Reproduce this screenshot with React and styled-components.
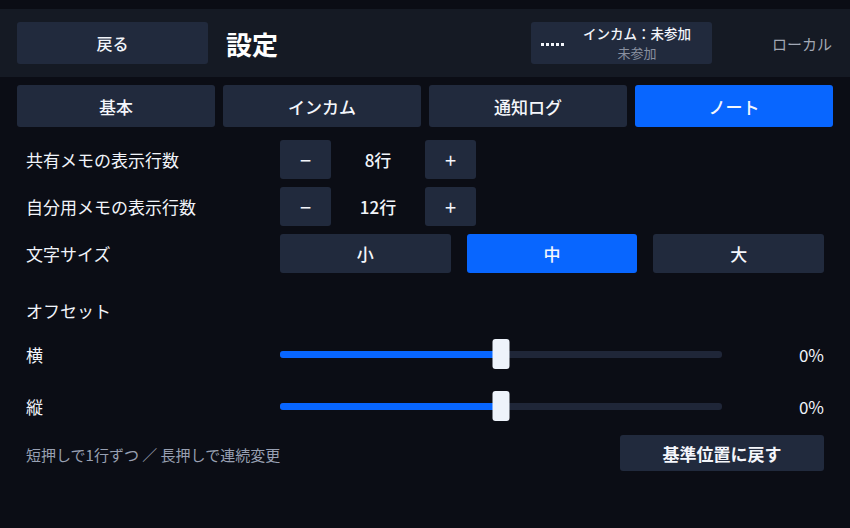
import React, {useState} from "react";
import styled, {createGlobalStyle} from "styled-components";

const GlobalStyle = createGlobalStyle`
  html, body {
	margin: 0;
	padding: 0;
	background-color: #0b0d15;
  }

  body {
	font-family: "Noto Sans CJK JP", "Noto Sans", sans-serif;
	color: #f1f4fa;
  }

  button {
	font-family: inherit;
  }
`;

const Screen = styled.div`
  width: 850px;
  height: 528px;
  padding-top: 9px;
  box-sizing: border-box;
  overflow: hidden;
`;

const Header = styled.header`
  height: 68px;
  background-color: #151a24;
  display: flex;
  align-items: center;
  padding: 0 18px 0 17px;
`;

const BackButton = styled.button`
  width: 191px;
  height: 42px;
  border: none;
  border-radius: 3px;
  background-color: #212a3d;
  color: #f1f4fa;
  font-size: 16px;
  font-weight: 500;
`;

const Title = styled.h1`
  margin: 0 0 0 18px;
  font-size: 26px;
  font-weight: 700;
  color: #ffffff;
`;

const IntercomBox = styled.div`
  margin-left: auto;
  width: 181px;
  height: 42px;
  box-sizing: border-box;
  border-radius: 3px;
  background-color: #212a3d;
  display: flex;
  align-items: center;
  padding: 0 10px;
`;

const Dots = styled.div`
  display: flex;
  gap: 2px;
  margin-top: 2px;

  span {
	width: 3px;
	height: 3px;
	background-color: #f1f4fa;
  }
`;

const IntercomText = styled.div`
  flex: 1;
  display: flex;
  flex-direction: column;
  align-items: center;
  line-height: 19px;
  padding-left: 8px;

  span:first-child {
	font-size: 13.5px;
	font-weight: 500;
	color: #f1f4fa;
  }

  span:last-child {
	font-size: 13px;
	color: #8990a0;
  }
`;

const LocalLabel = styled.span`
  margin-left: 60px;
  font-size: 15px;
  color: #a2a8b5;
`;

const Tabs = styled.nav`
  margin-top: 8px;
  padding: 0 17px;
  display: grid;
  grid-template-columns: repeat(4, 1fr);
  gap: 8px;
`;

const Button = styled.button`
  height: ${p => p.$h || 42}px;
  border: none;
  border-radius: 3px;
  background-color: ${p => p.$active ? "#0866ff" : "#212a3d"};
  color: #f4f6fb;
  font-size: ${p => p.$size || 17}px;
  font-weight: ${p => p.$weight || 500};
  padding: 0;
`;

const Content = styled.section`
  margin-top: 13px;
  padding: 0 26px;
  display: flex;
  flex-direction: column;
`;

const Row = styled.div`
  display: grid;
  grid-template-columns: 254px 1fr;
  align-items: center;
  height: 39px;
  margin-bottom: 8px;
`;

const Label = styled.span`
  font-size: 17px;
  font-weight: 400;
  color: #f1f4fa;
`;

const Stepper = styled.div`
  display: grid;
  grid-template-columns: 51px 94px 51px;
  height: 100%;
  align-items: center;
`;

const StepValue = styled.span`
  text-align: center;
  font-size: 17px;
  font-weight: 500;
`;

const SizeGroup = styled.div`
  display: grid;
  grid-template-columns: repeat(3, 1fr);
  gap: 16px;
  height: 100%;
`;

const SectionTitle = styled.div`
  margin-top: 17px;
  height: 24px;
  display: flex;
  align-items: center;
`;

const SliderRow = styled.div`
  display: grid;
  grid-template-columns: 254px 442px 1fr;
  align-items: center;
  height: 30px;
  margin-top: ${p => p.$gap}px;
`;

const Track = styled.div`
  position: relative;
  height: 7px;
  border-radius: 3px;
  background-color: #1f2638;
`;

const Fill = styled.div`
  height: 100%;
  border-radius: 3px 0 0 3px;
  background-color: #0866ff;
`;

const Thumb = styled.div`
  position: absolute;
  top: 50%;
  width: 17px;
  height: 30px;
  transform: translate(-50%, -50%);
  border-radius: 3px;
  background-color: #eef3fb;
`;

const SliderValue = styled.span`
  text-align: right;
  font-size: 17px;
  font-weight: 400;
`;

const Footer = styled.div`
  margin-top: 14px;
  display: flex;
  align-items: center;
  justify-content: space-between;
`;

const Hint = styled.span`
  font-size: 15px;
  color: #98a0b2;
  margin-top: 3px;
`;

const ResetButton = styled(Button)`
  width: 204px;
`;

const Slider = ({label, value, gap}) => (
	<SliderRow $gap={gap}>
		<Label>{label}</Label>
		<Track>
			<Fill style={{width: `${50 + value / 2}%`}}/>
			<Thumb style={{left: `${50 + value / 2}%`}}/>
		</Track>
		<SliderValue>{value}%</SliderValue>
	</SliderRow>
);

const tabs = ["基本", "インカム", "通知ログ", "ノート"];
const sizes = ["小", "中", "大"];

const App = () => {
	const [tab, setTab] = useState(3);
	const [shared, setShared] = useState(8);
	const [own, setOwn] = useState(12);
	const [size, setSize] = useState(1);

	return (
		<>
			<GlobalStyle/>
			<Screen>
				<Header>
					<BackButton>戻る</BackButton>
					<Title>設定</Title>
					<IntercomBox>
						<Dots>
							<span/><span/><span/><span/><span/>
						</Dots>
						<IntercomText>
							<span>インカム：未参加</span>
							<span>未参加</span>
						</IntercomText>
					</IntercomBox>
					<LocalLabel>ローカル</LocalLabel>
				</Header>

				<Tabs>
					{tabs.map((t, i) => (
						<Button key={t} $active={i === tab} onClick={() => setTab(i)}>{t}</Button>
					))}
				</Tabs>

				<Content>
					<Row>
						<Label>共有メモの表示行数</Label>
						<Stepper>
							<Button $h={39} $size={20} $weight={400} onClick={() => setShared(shared - 1)}>−</Button>
							<StepValue>{shared}行</StepValue>
							<Button $h={39} $size={20} $weight={400} onClick={() => setShared(shared + 1)}>+</Button>
						</Stepper>
					</Row>
					<Row>
						<Label>自分用メモの表示行数</Label>
						<Stepper>
							<Button $h={39} $size={20} $weight={400} onClick={() => setOwn(own - 1)}>−</Button>
							<StepValue>{own}行</StepValue>
							<Button $h={39} $size={20} $weight={400} onClick={() => setOwn(own + 1)}>+</Button>
						</Stepper>
					</Row>
					<Row>
						<Label>文字サイズ</Label>
						<SizeGroup>
							{sizes.map((s, i) => (
								<Button key={s} $h={39} $active={i === size} onClick={() => setSize(i)}>{s}</Button>
							))}
						</SizeGroup>
					</Row>

					<SectionTitle>
						<Label>オフセット</Label>
					</SectionTitle>
					<Slider label="横" value={0} gap={17}/>
					<Slider label="縦" value={0} gap={22}/>

					<Footer>
						<Hint>短押しで1行ずつ ／ 長押しで連続変更</Hint>
						<ResetButton $h={36} $weight={700}>基準位置に戻す</ResetButton>
					</Footer>
				</Content>
			</Screen>
		</>
	)
}

export default App;
